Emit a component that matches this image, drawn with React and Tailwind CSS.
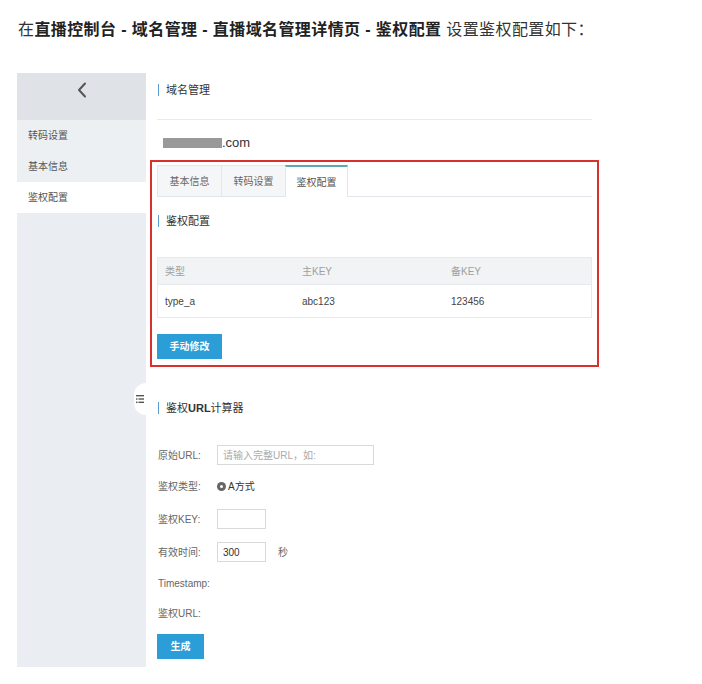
import React from "react";

const font = { fontFamily: '"Liberation Sans", "Noto Sans CJK SC", sans-serif' };

function SectionTitle({ children }) {
  return (
    <div className="flex items-center text-[11px] text-[#333]">
      <span className="w-px h-[12px] bg-[#5a9bd0] mr-[7px]" />
      {children}
    </div>
  );
}

function Sidebar() {
  const items = ["转码设置", "基本信息", "鉴权配置"];
  return (
    <div className="w-[129px] bg-[#eaedf1] flex flex-col">
      <div className="h-[47px] bg-[#dfe3e8] flex justify-center pt-[9px]">
        <svg width="10" height="16" viewBox="0 0 10 16" fill="none">
          <path d="M8 1.5L2 8l6 6.5" stroke="#555" strokeWidth="2" strokeLinecap="round" strokeLinejoin="round" />
        </svg>
      </div>
      {items.map((item, i) => (
        <div
          key={item}
          className={
            "h-[31px] flex items-center pl-[11px] text-[10px] text-[#555] " +
            (i === 2 ? "bg-white" : "bg-[#edf0f3]")
          }
        >
          {item}
        </div>
      ))}
    </div>
  );
}

function FormRow({ label, children, className }) {
  return (
    <div className={"flex items-center h-[20px] " + className}>
      <div className="w-[59px] text-[10px] text-[#666]">{label}</div>
      {children}
    </div>
  );
}

export default function App() {
  const tabs = ["基本信息", "转码设置", "鉴权配置"];
  return (
    <div className="bg-white w-[702px] h-[684px]" style={font}>
      <div className="pt-[18px] pl-[18px] text-[16px] leading-[24px] tracking-[0.4px] text-[#333]">
        在<b className="text-[#222]">直播控制台 - 域名管理 - 直播域名管理详情页 - 鉴权配置</b> 设置鉴权配置如下：
      </div>

      <div className="flex mt-[31px] ml-[17px]">
        <Sidebar />

        <div className="relative w-[460px] bg-white pl-[11px] pb-[8px]">
          <div className="absolute -left-[12px] top-[310px] w-[12px] h-[32px] bg-white rounded-l-full flex items-center justify-end pr-[2px]">
            <svg width="8" height="8" viewBox="0 0 8 8">
              <rect x="0" y="0" width="8" height="1.4" fill="#555" />
              <rect x="0" y="3.3" width="1.5" height="1.4" fill="#555" />
              <rect x="2.5" y="3.3" width="5.5" height="1.4" fill="#555" />
              <rect x="0" y="6.6" width="1.5" height="1.4" fill="#555" />
              <rect x="2.5" y="6.6" width="5.5" height="1.4" fill="#555" />
            </svg>
          </div>

          <div className="w-[435px]">
            <div className="h-[34px] flex items-center pl-px">
              <SectionTitle>域名管理</SectionTitle>
            </div>
            <div className="mt-[12px] border-t border-[#e8eaed]" />
            <div className="h-[40px] pt-[6px] flex items-center pl-[6px] text-[13px] text-[#333]">
              <span className="inline-block w-[59px] h-[10px] bg-[#999]" />
              .com
            </div>

            <div className="-mx-[7px] border-2 border-[#d9302b] px-[5px] pt-[3px] pb-[6px]">
              <div className="flex h-[32px] border-b border-[#e3e6ea]">
                {tabs.map((t, i) =>
                  i === 2 ? (
                    <div
                      key={t}
                      className="w-[63px] -mb-px bg-white border-x border-[#e3e6ea] border-t-2 border-t-[#5aaab0] flex items-center justify-center text-[10px] text-[#555]"
                    >
                      {t}
                    </div>
                  ) : (
                    <div
                      key={t}
                      className="w-[64px] bg-[#f5f6f8] border-t border-l border-[#e3e6ea] flex items-center justify-center text-[10px] text-[#666]"
                    >
                      {t}
                    </div>
                  )
                )}
              </div>

              <div className="h-[48px] flex items-center pl-px">
                <SectionTitle>鉴权配置</SectionTitle>
              </div>

              <div className="mt-[12px] border border-[#e6e9ed] text-[10px]">
                <div className="h-[27px] bg-[#f1f3f5] flex items-center text-[#a0a0a0] border-b border-[#e6e9ed]">
                  <div className="w-[144px] pl-[7px]">类型</div>
                  <div className="w-[149px]">主KEY</div>
                  <div>备KEY</div>
                </div>
                <div className="h-[32px] flex items-center text-[#444]">
                  <div className="w-[144px] pl-[7px]">type_a</div>
                  <div className="w-[149px]">abc123</div>
                  <div>123456</div>
                </div>
              </div>

              <button className="mt-[16px] w-[65px] h-[25px] bg-[#2b9dd7] text-white text-[10px] font-bold">
                手动修改
              </button>
            </div>

            <div className="mt-[24px] h-[34px] flex items-center pl-px">
              <SectionTitle>
                鉴权<span className="font-bold">URL</span>计算器
              </SectionTitle>
            </div>

            <FormRow label="原始URL:" className="mt-[20px] pl-px">
              <div className="w-[157px] h-[20px] border border-[#d9d9d9] flex items-center pl-[5px] text-[10px] text-[#aaa]">
                请输入完整URL，如:
              </div>
            </FormRow>

            <FormRow label="鉴权类型:" className="mt-[11px] pl-px">
              <span className="w-[9px] h-[9px] rounded-full bg-[#666] flex items-center justify-center">
                <span className="w-[3px] h-[3px] rounded-full bg-white" />
              </span>
              <span className="ml-[2px] text-[10px] text-[#333]">A方式</span>
            </FormRow>

            <FormRow label="鉴权KEY:" className="mt-[13px] pl-px">
              <div className="w-[49px] h-[20px] border border-[#d9d9d9]" />
            </FormRow>

            <FormRow label="有效时间:" className="mt-[13px] pl-px">
              <div className="w-[49px] h-[20px] border border-[#d9d9d9] flex items-center pl-[5px] text-[10px] text-[#333]">
                300
              </div>
              <span className="ml-[12px] text-[10px] text-[#666]">秒</span>
            </FormRow>

            <FormRow label="Timestamp:" className="mt-[11px] pl-px" />

            <FormRow label="鉴权URL:" className="mt-[10px] pl-px" />

            <button className="mt-[11px] w-[47px] h-[25px] bg-[#2b9dd7] text-white text-[10px] font-bold">
              生成
            </button>
          </div>
        </div>
      </div>
    </div>
  );
}
